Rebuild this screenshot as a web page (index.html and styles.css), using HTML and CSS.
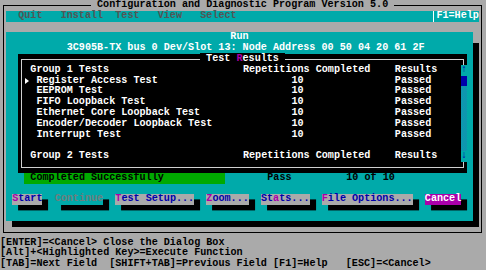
FILE: index.html
```html
<!DOCTYPE html>
<html lang="en">
<head>
  <meta charset="UTF-8">
  <link rel="stylesheet" href="styles.css">
  <title>Configuration and Diagnostic Program</title>
</head>
<body>
  <div class="screen">
    <div class="frame"></div>
    <div class="app_title">Configuration and Diagnostic Program Version 5.0</div>

    <nav class="menubar">
      <span class="menu_items">  Quit   Install  Test   View   Select</span>
      <span class="menu_help">F1=Help</span>
    </nav>

    <div class="dialog_shadow"></div>
    <section class="dialog">
      <h1 class="dialog_title">Run</h1>
      <p class="adapter">3C905B-TX bus 0 Dev/Slot 13: Node Address 00 50 04 20 61 2F</p>

      <div class="results">
        <div class="results_frame"></div>
        <div class="results_title"><span>Test <b class="hot">R</b>esults</span></div>

        <div class="results_list">
          <div class="result_row group_row">
            <span></span><span>Group 1 Tests</span><span>Repetitions Completed</span><span>Results</span>
          </div>
          <div class="result_row">
            <span class="pointer"></span><span class="test_name">Register Access Test</span><span class="reps">10</span><span>Passed</span>
          </div>
          <div class="result_row">
            <span></span><span class="test_name">EEPROM Test</span><span class="reps">10</span><span>Passed</span>
          </div>
          <div class="result_row">
            <span></span><span class="test_name">FIFO Loopback Test</span><span class="reps">10</span><span>Passed</span>
          </div>
          <div class="result_row">
            <span></span><span class="test_name">Ethernet Core Loopback Test</span><span class="reps">10</span><span>Passed</span>
          </div>
          <div class="result_row">
            <span></span><span class="test_name">Encoder/Decoder Loopback Test</span><span class="reps">10</span><span>Passed</span>
          </div>
          <div class="result_row">
            <span></span><span class="test_name">Interrupt Test</span><span class="reps">10</span><span>Passed</span>
          </div>
          <div class="result_row group_row group_next">
            <span></span><span>Group 2 Tests</span><span>Repetitions Completed</span><span>Results</span>
          </div>
        </div>

        <div class="scrollbar">
          <span class="scroll_arrow">&#8593;</span>
          <span class="scroll_thumb"></span>
          <span class="scroll_track"></span>
          <span class="scroll_arrow">&#8595;</span>
        </div>
      </div>

      <div class="status">
        <span class="status_bar">Completed Successfully</span>
        <span class="pass_label">Pass</span>
        <span class="pass_count">10 of 10</span>
      </div>

      <div class="buttons">
        <button class="btn"><b class="hot">S</b>tart</button>
        <button class="btn btn_disabled">Continue</button>
        <button class="btn"><b class="hot">T</b>est Setup...</button>
        <button class="btn"><b class="hot">Z</b>oom...</button>
        <button class="btn">St<b class="hot">a</b>ts...</button>
        <button class="btn"><b class="hot">F</b>ile Options...</button>
        <button class="btn btn_default">Cancel</button>
      </div>
    </section>

    <div class="hints">
      <p>[ENTER]=&lt;Cancel&gt; Close the Dialog Box</p>
      <p>[Alt]+&lt;Highlighted Key&gt;=Execute Function</p>
      <p>[TAB]=Next Field  [SHIFT+TAB]=Previous Field [F1]=Help   [ESC]=&lt;Cancel&gt;</p>
    </div>
  </div>
</body>
</html>
```

FILE: styles.css
```css
/* Text mode palette and cell size */
:root {
  --cw: 6.075px;
  --rh: 10.8px;
  --gray: #aaaaaa;
  --dark: #555555;
  --teal: #00aaaa;
  --blue: #0000aa;
  --magenta: #aa00aa;
  --green: #00aa00;
}

* {
  box-sizing: border-box;
  margin: 0;
  padding: 0;
}

h1, p, b, button {
  font: inherit;
}

body {
  background-color: var(--gray);
  font-family: "Liberation Mono", "DejaVu Sans Mono", monospace;
  font-size: 10.125px;
  font-weight: bold;
  line-height: var(--rh);
}

/* 80x25 screen */
.screen {
  display: grid;
  grid-template-columns: repeat(80, var(--cw));
  grid-template-rows: repeat(25, var(--rh));
  width: 486px;
  height: 270px;
  overflow: hidden;
  background-color: var(--gray);
  color: #000;
}

.frame {
  grid-column: 1 / 81;
  grid-row: 1 / 23;
  margin: 5px 3px;
  border: 1px solid #000;
}

.app_title {
  grid-column: 16 / 66;
  grid-row: 1;
  padding: 0 var(--cw);
  background-color: var(--gray);
  white-space: pre;
}

/* Menu bar */
.menubar {
  grid-column: 2 / 80;
  grid-row: 2;
  display: flex;
  justify-content: space-between;
  background-color: var(--teal);
}

.menu_items {
  white-space: pre;
  color: var(--dark);
}

.menu_help {
  width: calc(8 * var(--cw));
  padding-left: var(--cw);
  color: #fff;
  background: linear-gradient(#fff, #fff) no-repeat 3px 0 / 1px 100%;
}

/* Run dialog */
.dialog_shadow {
  grid-column: 3 / 80;
  grid-row: 5 / 22;
  background-color: #000;
}

.dialog {
  grid-column: 2 / 79;
  grid-row: 4 / 22;
  margin-bottom: 5.4px;
  display: grid;
  grid-template-columns: repeat(77, var(--cw));
  grid-template-rows: repeat(17, var(--rh));
  background-color: var(--teal);
}

.dialog_title {
  grid-column: 1 / -1;
  grid-row: 1;
  text-align: center;
  color: #fff;
}

.adapter {
  grid-column: 11 / -1;
  grid-row: 2;
  color: #fff;
  white-space: pre;
}

/* Test results list */
.results {
  grid-column: 3 / 77;
  grid-row: 3 / 14;
  display: grid;
  grid-template-columns: repeat(74, var(--cw));
  grid-template-rows: repeat(11, var(--rh));
  background-color: #000;
  color: #fff;
}

.results_frame {
  grid-column: 1 / -1;
  grid-row: 1 / -1;
  margin: 5px 3px;
  border: 1px solid #d0d0d0;
}

.results_title {
  grid-column: 1 / -1;
  grid-row: 1;
  text-align: center;
}

.results_title span {
  padding: 0 var(--cw);
  background-color: #000;
}

.results_title .hot {
  color: var(--magenta);
}

.results_list {
  grid-column: 2 / 74;
  grid-row: 2 / 11;
}

.result_row {
  display: grid;
  grid-template-columns: var(--cw) calc(35 * var(--cw)) calc(25 * var(--cw)) 1fr;
  height: var(--rh);
  white-space: pre;
}

.group_next {
  margin-top: var(--rh);
}

.test_name {
  padding-left: var(--cw);
}

.reps {
  padding-left: calc(8 * var(--cw));
}

.pointer {
  width: 0;
  height: 0;
  margin: 2px 0 0 1px;
  border-left: 4px solid #fff;
  border-top: 3px solid transparent;
  border-bottom: 3px solid transparent;
}

.scrollbar {
  grid-column: 74;
  grid-row: 2 / 11;
  display: flex;
  flex-direction: column;
  background-color: var(--teal);
  color: var(--blue);
  text-align: center;
}

.scroll_arrow, .scroll_thumb {
  height: var(--rh);
}

.scroll_thumb {
  background-color: var(--blue);
}

.scroll_track {
  flex: 1;
  background: repeating-conic-gradient(var(--teal) 0 25%, #1c84b4 0 50%) 0 0 / 2px 2px;
}

/* Status line */
.status {
  grid-column: 1 / -1;
  grid-row: 14;
  display: flex;
  padding-left: calc(3 * var(--cw));
  white-space: pre;
}

.status_bar {
  width: calc(33 * var(--cw));
  padding-left: var(--cw);
  background-color: var(--green);
}

.pass_label {
  width: calc(13 * var(--cw));
  margin-left: calc(7 * var(--cw));
}

/* Buttons */
.buttons {
  grid-column: 1 / -1;
  grid-row: 16;
  display: flex;
  gap: calc(2 * var(--cw));
  padding-left: var(--cw);
}

.btn {
  height: var(--rh);
  border: none;
  background-color: var(--gray);
  color: var(--blue);
  box-shadow: var(--cw) 5.4px 0 #000;
  white-space: pre;
}

.btn .hot {
  color: var(--magenta);
}

.btn_disabled {
  background-color: var(--teal);
  color: #6e7e7e;
}

.btn_default {
  background-color: var(--magenta);
  color: #fff;
}

/* Key hints */
.hints {
  grid-column: 1 / -1;
  grid-row: 23 / 26;
}

.hints p {
  height: var(--rh);
  white-space: pre;
}
```
